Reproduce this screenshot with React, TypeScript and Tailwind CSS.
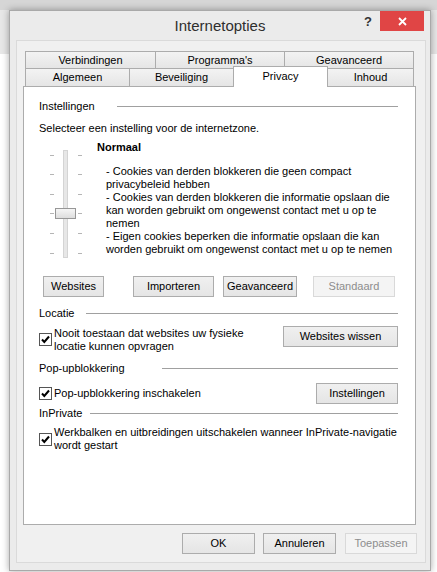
import React from "react";

const btn =
  "h-[21px] border border-[#acacac] bg-[linear-gradient(#f0f0f0,#e5e5e5)] text-black text-[11px] leading-[19px] text-center";
const btnOff =
  "h-[21px] border border-[#d9d9d9] bg-[#f4f4f4] text-[#8d8d8d] text-[11px] leading-[19px] text-center";
const tab =
  "border-t border-l border-[#acacac] bg-[linear-gradient(#f3f3f3,#e5e5e5)] text-center";

function Check() {
  return (
    <svg width="13" height="13" viewBox="0 0 13 13" className="shrink-0">
      <rect x="0.5" y="0.5" width="12" height="12" fill="#fff" stroke="#555" />
      <path d="M3 6.5 L5.3 9 L10 3.5" fill="none" stroke="#000" strokeWidth="2" />
    </svg>
  );
}

function Group({ label, w }: { label: string; w: number }) {
  return (
    <div className="flex items-center h-[13px] leading-[13px] pr-[17px]">
      <span style={{ width: w }} className="shrink-0">
        {label}
      </span>
      <div className="flex-1 h-px bg-[#a0a0a0]" />
    </div>
  );
}

function Slider() {
  const ticks = [6, 25, 45, 64, 84, 104];
  return (
    <svg width="41" height="113" viewBox="0 0 41 113">
      <defs>
        <linearGradient id="th" x1="0" y1="0" x2="0" y2="1">
          <stop offset="0" stopColor="#f7f7f7" />
          <stop offset="1" stopColor="#dcdcdc" />
        </linearGradient>
      </defs>
      <rect x="15.5" y="1.5" width="4" height="107" fill="#e7e7e7" stroke="#d4d4d4" />
      {ticks.map((t) => (
        <g key={t}>
          <rect x="2" y={t} width="4" height="1" fill="#b5b5b5" />
          <rect x="30" y={t} width="4" height="1" fill="#b5b5b5" />
        </g>
      ))}
      <rect x="7.5" y="59.5" width="20" height="10" fill="url(#th)" stroke="#979797" />
    </svg>
  );
}

export default function App() {
  return (
    <div className="w-[437px] h-[572px] overflow-hidden pt-[10px] pl-[9px] bg-[linear-gradient(to_bottom,#d6d6d6_0px,#d6d6d6_10px,#e7e7e7_10px,#e7e7e7_54px,#ffffff_54px)] font-['Liberation_Sans',Arial,sans-serif] text-[11px] text-black">
      <div className="w-[422px] h-[561px] border border-[#a9a9a9] bg-[#ebebeb] shadow-[0_0_7px_rgba(0,0,0,0.35)]">
        {/* title bar */}
        <div className="h-[29px] flex">
          <div className="w-[70px]" />
          <div className="flex-1 text-center text-[15px] leading-[29px] text-[#2e2e2e]">
            Internetopties
          </div>
          <div className="w-[70px] flex items-start">
            <div className="w-[20px] h-[21px] ml-[-2px] text-center text-[13px] font-bold leading-[21px] text-[#333]">
              ?
            </div>
            <div className="w-[44px] h-[20px] ml-[2px] bg-[#e04545] flex items-center justify-center">
              <svg width="9" height="9" viewBox="0 0 9 9">
                <path d="M1 1 L8 8 M8 1 L1 8" stroke="#fff" strokeWidth="1.8" />
              </svg>
            </div>
          </div>
        </div>

        {/* inner frame */}
        <div className="ml-[6px] w-[410px] h-[523px] border border-[#dadada] bg-[#f0f0f0] pt-[10px]">
          {/* tabs */}
          <div className="ml-[8px] w-[389px] flex h-[17px] leading-[16px]">
            <div className={`${tab} w-[130px]`}>Verbindingen</div>
            <div className={`${tab} w-[129px]`}>Programma's</div>
            <div className={`${tab} w-[130px] border-r`}>Geavanceerd</div>
          </div>
          <div className="ml-[8px] w-[389px] flex items-end h-[18px] leading-[17px]">
            <div className={`${tab} w-[104px] h-[18px]`}>Algemeen</div>
            <div className={`${tab} w-[104px] h-[18px]`}>Beveiliging</div>
            <div className="relative z-10 w-[95px] h-[21px] -mb-px border-t border-x border-[#acacac] bg-white text-center leading-[19px]">
              Privacy
            </div>
            <div className="w-[86px] h-[18px] border-t border-r border-[#acacac] bg-[linear-gradient(#f3f3f3,#e5e5e5)] text-center">
              Inhoud
            </div>
          </div>

          {/* panel */}
          <div className="ml-[6px] w-[393px] h-[439px] border border-[#acacac] bg-white pt-[13px] pl-[15px]">
            <Group label="Instellingen" w={78} />
            <div className="mt-[9px] leading-[13px]">
              Selecteer een instelling voor de internetzone.
            </div>
            <div className="mt-[6px] h-[135px] flex">
              <div className="w-[58px] shrink-0 pl-[9px] pt-[8px]">
                <Slider />
              </div>
              <div className="leading-[13px]">
                <div className="font-bold">Normaal</div>
                <div className="mt-[11px] ml-[9px] whitespace-nowrap">
                  - Cookies van derden blokkeren die geen compact
                  <br />
                  privacybeleid hebben
                  <br />
                  - Cookies van derden blokkeren die informatie opslaan die
                  <br />
                  kan worden gebruikt om ongewenst contact met u op te
                  <br />
                  nemen
                  <br />
                  - Eigen cookies beperken die informatie opslaan die kan
                  <br />
                  worden gebruikt om ongewenst contact met u op te nemen
                </div>
              </div>
            </div>
            <div className="flex">
              <div className={`${btn} ml-[4px] w-[61px]`}>Websites</div>
              <div className={`${btn} ml-[29px] w-[81px]`}>Importeren</div>
              <div className={`${btn} ml-[9px] w-[74px]`}>Geavanceerd</div>
              <div className={`${btnOff} ml-[16px] w-[82px]`}>Standaard</div>
            </div>

            <div className="mt-[10px]">
              <Group label="Locatie" w={47} />
            </div>
            <div className="mt-[6px] h-[27px] flex items-start pr-[17px]">
              <div className="flex items-center gap-[2px] h-[27px] flex-1">
                <Check />
                <div className="leading-[13px]">
                  Nooit toestaan dat websites uw fysieke
                  <br />
                  locatie kunnen opvragen
                </div>
              </div>
              <div className={`${btn} w-[115px]`}>Websites wissen</div>
            </div>

            <div className="mt-[9px]">
              <Group label="Pop-upblokkering" w={123} />
            </div>
            <div className="mt-[8px] h-[21px] flex items-center pr-[17px]">
              <div className="flex items-center gap-[2px] flex-1 leading-[13px]">
                <Check />
                <span>Pop-upblokkering inschakelen</span>
              </div>
              <div className={`${btn} w-[82px]`}>Instellingen</div>
            </div>

            <div className="mt-[3px]">
              <Group label="InPrivate" w={51} />
            </div>
            <div className="mt-[6px] flex items-center gap-[2px] h-[26px]">
              <Check />
              <div className="leading-[13px] whitespace-nowrap">
                Werkbalken en uitbreidingen uitschakelen wanneer InPrivate-navigatie
                <br />
                wordt gestart
              </div>
            </div>
          </div>

          {/* dialog buttons */}
          <div className="mt-[8px] flex justify-end pr-[8px]">
            <div className={`${btn} w-[73px]`}>OK</div>
            <div className={`${btn} ml-[8px] w-[73px]`}>Annuleren</div>
            <div className={`${btnOff} ml-[9px] w-[72px]`}>Toepassen</div>
          </div>
        </div>
      </div>
    </div>
  );
}
